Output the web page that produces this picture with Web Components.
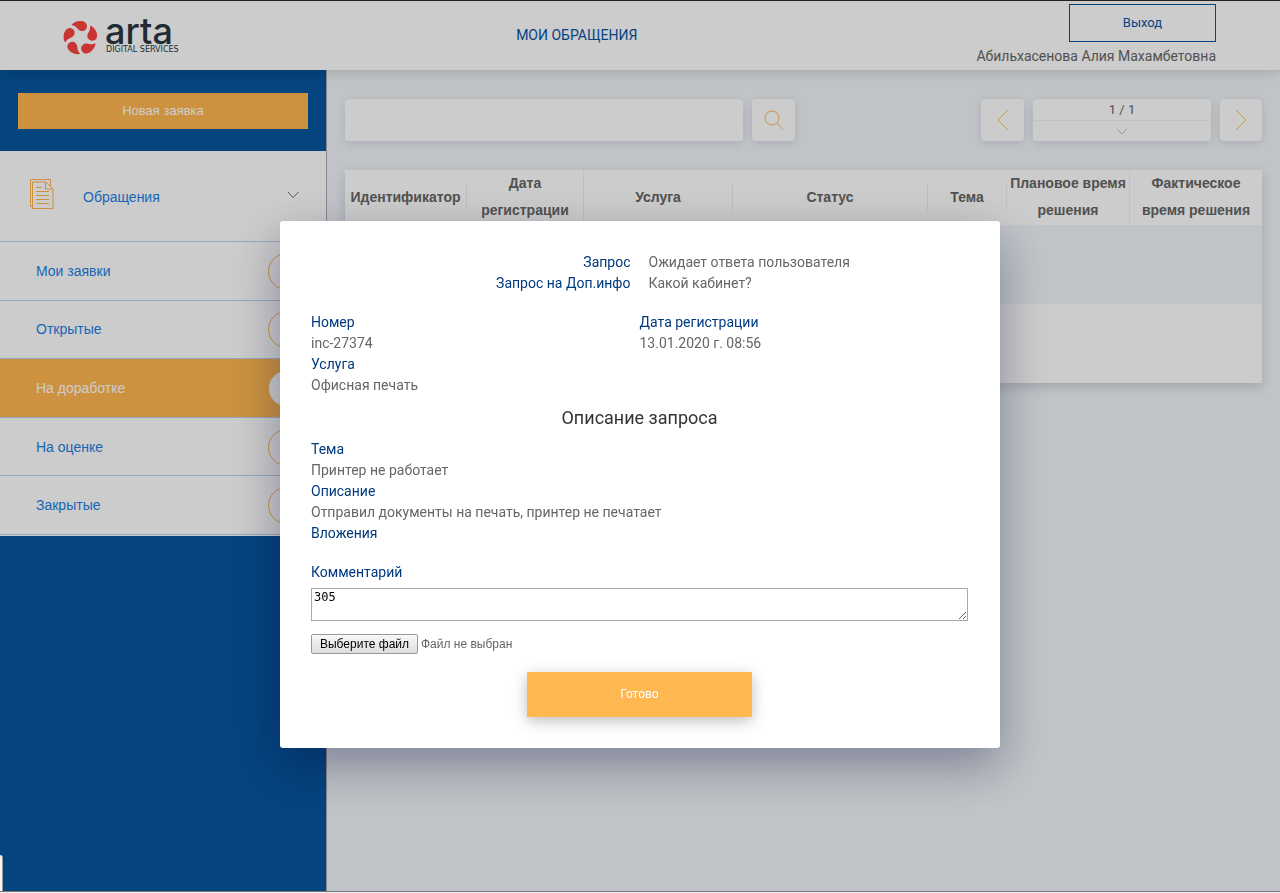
<!DOCTYPE html>
<html lang="ru">
<head>
<meta charset="utf-8">
<title>Мои обращения</title>
<style>
  html, body { height: 100%; }
  body { margin: 0; background: #eee; font: 14px/21px Roboto, sans-serif; color: #666; --brand: #06559f; --link: #1c7fe6; --accent: #ffb751; --panel: #f1f6fa; }
</style>
</head>
<body>
<service-desk>
  <top-bar slot="header">
    <a slot="nav" href="#requests">МОИ ОБРАЩЕНИЯ</a>
    <span slot="user">Абильхасенова Алия Махамбетовна</span>
  </top-bar>
  <side-menu slot="menu">
    <menu-item>Мои заявки</menu-item>
    <menu-item>Открытые</menu-item>
    <menu-item active>На доработке</menu-item>
    <menu-item>На оценке</menu-item>
    <menu-item>Закрытые</menu-item>
  </side-menu>
  <list-toolbar>1 / 1</list-toolbar>
  <request-table></request-table>
</service-desk>
<request-dialog>
  <field-row slot="summary" label="Запрос" split>Ожидает ответа пользователя</field-row>
  <field-row slot="summary" label="Запрос на Доп.инфо" split>Какой кабинет?</field-row>
  <field-row slot="info" label="Номер">inc-27374</field-row>
  <field-row slot="info" label="Дата регистрации">13.01.2020 г. 08:56</field-row>
  <field-row slot="info" label="Услуга">Офисная печать</field-row>
  <field-row slot="details" label="Тема">Принтер не работает</field-row>
  <field-row slot="details" label="Описание">Отправил документы на печать, принтер не печатает</field-row>
  <field-row slot="details" label="Вложения"></field-row>
</request-dialog>

<script>
const define = (name, html, setup) => {
  const template = document.createElement('template');
  template.innerHTML = html;
  customElements.define(name, class extends HTMLElement {
    constructor() {
      super();
      this.attachShadow({ mode: 'open' }).append(template.content.cloneNode(true));
    }
    connectedCallback() { if (setup) setup(this, this.shadowRoot); }
  });
};

define('arta-logo', `
<style>
  :host { display: block; }
  svg { display: block; overflow: visible; }
  .name { font: 500 36px Inter, sans-serif; }
  .tag { font: 8px "DejaVu Sans", sans-serif; }
</style>
<svg width="113" height="40" viewBox="0 0 113 40" role="img" aria-label="arta digital services">
  <g fill="#fb4340">
    <path id="blade" d="M7.500 9C11 4 22 3 23 9.500C23.500 15 17 17 14 13C12 10.500 10 9.500 7.500 9Z"/>
    <use href="#blade" transform="rotate(72 16.500 22)"/>
    <use href="#blade" transform="rotate(144 16.500 22)"/>
    <use href="#blade" transform="rotate(216 16.500 22)"/>
    <use href="#blade" transform="rotate(288 16.500 22)"/>
  </g>
  <g fill="#2a3640">
    <text class="name" x="41" y="28">arta</text>
    <text class="tag" x="42" y="36">DIGITAL SERVICES</text>
  </g>
</svg>`);

define('top-bar', `
<style>
  :host { display: flex; justify-content: space-between; align-items: center; box-sizing: border-box; height: 70px; padding: 0 64px; border-top: 1px solid #222; background: #fff; box-shadow: 0 2px 12px rgba(0,0,30,.16); position: relative; z-index: 1; }
  ::slotted(a) { color: var(--brand); text-decoration: none; }
  .user { display: flex; flex-direction: column; align-items: flex-end; gap: 4px; }
  button { width: 147px; height: 38px; padding: 0 0 2px; background: none; border: 1px solid var(--brand); color: var(--brand); font: 13px Roboto, sans-serif; }
</style>
<arta-logo></arta-logo>
<nav><slot name="nav"></slot></nav>
<div class="user"><button>Выход</button><slot name="user"></slot></div>`);

define('side-menu', `
<style>
  :host { display: block; background: var(--brand); border-right: 1px solid #aaa; font-family: "Liberation Sans", sans-serif; }
  .top { padding: 23px 18px 22px; }
  .top button { display: block; width: 100%; height: 36px; padding: 0 0 2px; border: 0; background: var(--accent); color: #fff; font: 13px "Liberation Sans", sans-serif; }
  .group { display: flex; align-items: center; box-sizing: border-box; height: 91px; padding: 0 26px 0 29px; background: #fff; border-bottom: 1px solid #b9d4ea; color: var(--link); }
  .group span { flex: 1; margin-left: 29px; padding-top: 2px; }
  .group svg { margin-bottom: 4px; }
  .items { display: grid; grid-auto-rows: 1fr; height: 293px; border-bottom: 1px solid #fff; }
</style>
<div class="top"><button>Новая заявка</button></div>
<div class="group">
  <svg width="25" height="32" viewBox="0 0 25 32" fill="none" stroke="var(--accent)"><path d="M3.500 28.500H1.500V1.500H21.500V8"/><path d="M3.500 4H17L24 11V30.500H3.500ZM16.500 4V11H24"/><path d="M7 9.500H12.500M7 13.500H20M7 17.500H20M7 21.500H20M7 25.500H20"/></svg>
  <span>Обращения</span>
  <svg width="14" height="9" viewBox="0 0 14 9" fill="none" stroke="#666"><path d="M2 2L7 7.500L12.500 2"/></svg>
</div>
<nav class="items"><slot></slot></nav>`);

define('menu-item', `
<style>
  :host { display: block; background: #fff; border-bottom: 1px solid #b9d4ea; color: var(--link); }
  :host([active]) { background: var(--accent); color: #fff; }
  a { display: flex; align-items: center; justify-content: space-between; box-sizing: border-box; height: 100%; padding: 1px 21px 0 36px; color: inherit; text-decoration: none; }
  i { box-sizing: border-box; width: 37px; height: 37px; border: 1px solid var(--accent); border-radius: 50%; }
  :host([active]) i { background: #fff; }
</style>
<a href="#list"><slot></slot><i></i></a>`);

define('list-toolbar', `
<style>
  :host { display: flex; gap: 9px; }
  input, button, .page { box-sizing: border-box; height: 42px; border: 0; border-radius: 4px; background: #fff; box-shadow: 0 2px 10px rgba(0,0,30,.12); }
  input { flex: 0 1 398px; min-width: 0; padding: 0 12px; }
  button { display: grid; place-items: center; flex: none; width: 43px; padding: 0; }
  .prev { margin-left: auto; }
  .next { width: 42px; }
  .page { flex: none; width: 178px; text-align: center; font-size: 13px; }
  .page div { height: 21px; border-bottom: 1px solid #f3f3f3; }
  svg { fill: none; stroke: var(--accent); }
  .page svg { display: block; margin: 7px auto 0; stroke: #bbb; }
</style>
<input type="search" aria-label="Поиск">
<button aria-label="Найти"><svg width="20" height="20" viewBox="0 0 20 20"><circle cx="8" cy="8" r="7"/><path d="M13 13L19 19.500"/></svg></button>
<button class="prev" aria-label="Назад"><svg width="14" height="22" viewBox="0 0 14 22"><path d="M12 1L2 11L12 21"/></svg></button>
<div class="page"><div><slot></slot></div><svg width="12" height="8" viewBox="0 0 12 8"><path d="M1 1L6 6L11 1"/></svg></div>
<button class="next" aria-label="Вперёд"><svg width="14" height="22" viewBox="0 0 14 22"><path d="M2 1L12 11L2 21"/></svg></button>`);

define('request-table', `
<style>
  :host { display: block; margin-top: 29px; background: #fff; box-shadow: 0 4px 12px rgba(0,0,30,.16); }
  table { width: 100%; table-layout: fixed; border-collapse: collapse; font: bold 14px/27px "Liberation Sans", sans-serif; }
  th { padding: 0 0 1px; white-space: nowrap; }
  thead th div { border-right: 1px solid #f0f0f0; }
  thead th:last-child div { border: 0; }
  td { height: 79px; padding: 0; }
  tbody tr:first-child { background: var(--panel); }
</style>
<table>
  <colgroup><col style="width:122px"><col style="width:117px"><col style="width:149px"><col style="width:195px"><col style="width:79px"><col style="width:123px"><col style="width:132px"></colgroup>
  <thead><tr><th><div>Идентификатор</div></th><th><div>Дата<br>регистрации</div></th><th><div>Услуга</div></th><th><div>Статус</div></th><th><div>Тема</div></th><th><div>Плановое время<br>решения</div></th><th><div>Фактическое<br>время решения</div></th></tr></thead>
  <tbody><tr><td colspan="7"></td></tr><tr><td colspan="7"></td></tr></tbody>
</table>`);

define('service-desk', `
<style>
  :host { display: flex; flex-direction: column; box-sizing: border-box; min-height: calc(100vh - 1px); border-bottom: 1px solid #777; background: var(--panel); }
  .body { display: flex; flex: 1; }
  .menu { display: grid; flex: 0 0 327px; }
  main { flex: 1; min-width: 0; padding: 29px 18px; }
</style>
<slot name="header"></slot>
<div class="body"><div class="menu"><slot name="menu"></slot></div><main><slot></slot></main></div>`);

define('field-row', `
<style>
  :host { display: block; }
  .label { color: #00397f; }
  .label, .value { display: block; }
  :host([split]) { display: grid; grid-template-columns: 1fr 1fr; column-gap: 18px; }
  :host([split]) .label { text-align: right; }
</style>
<span class="label"></span><span class="value"><slot></slot></span>`,
(host, root) => { root.querySelector('.label').textContent = host.getAttribute('label'); });

define('request-dialog', `
<style>
  :host { position: fixed; inset: 1px 0 2px; z-index: 2; box-sizing: border-box; padding: 220px 20px 20px; background: rgba(0,0,0,.2); overflow: hidden; }
  :host::after { content: ""; position: absolute; left: 0; bottom: 0; width: 2px; height: 36px; background: #f5f5f5; border-right: 1px solid #999; border-top-right-radius: 4px; }
  section { box-sizing: border-box; max-width: 720px; margin: 0 auto; padding: 31px 32px 31px 31px; border-radius: 3px; background: #fff; box-shadow: 0 18px 50px rgba(8,11,55,.36); }
  .info { display: grid; grid-template-columns: 1fr 1fr; margin-top: 18px; }
  h2 { margin: 10px 0 9px; font: 18px/24px Roboto, sans-serif; color: #333; text-align: center; }
  .comment { display: block; margin: 18px 0 5px; color: #00397f; }
  textarea { display: block; box-sizing: border-box; width: 100%; height: 33px; margin: 0; padding: 1px 2px; border: 1px solid #a9a9a9; border-radius: 0; font: 12px/14px "DejaVu Sans Mono", monospace; color: #000; overflow: hidden; }
  .file { display: flex; align-items: center; gap: 3px; margin-top: 13px; font: 12px "Liberation Sans", sans-serif; position: relative; }
  .file input { position: absolute; width: 1px; height: 1px; margin: 0; opacity: 0; }
  .pick { box-sizing: border-box; width: 107px; height: 20px; border: 1px solid #999; border-radius: 2px; background: linear-gradient(#f8f8f8, #ddd); color: #000; line-height: 18px; text-align: center; }
  .done { display: block; width: 225px; height: 45px; margin: 18px auto 0; padding: 0 0 2px; border: 0; background: var(--accent); color: #fff; font: 12px Roboto, sans-serif; box-shadow: 0 4px 14px rgba(0,0,0,.26); }
</style>
<section role="dialog" aria-label="Описание запроса">
  <slot name="summary"></slot>
  <div class="info"><slot name="info"></slot></div>
  <h2>Описание запроса</h2>
  <slot name="details"></slot>
  <label class="comment" for="comment">Комментарий</label>
  <textarea id="comment">305</textarea>
  <label class="file"><input type="file"><span class="pick">Выберите файл</span><span>Файл не выбран</span></label>
  <button class="done">Готово</button>
</section>`);
</script>
</body>
</html>
